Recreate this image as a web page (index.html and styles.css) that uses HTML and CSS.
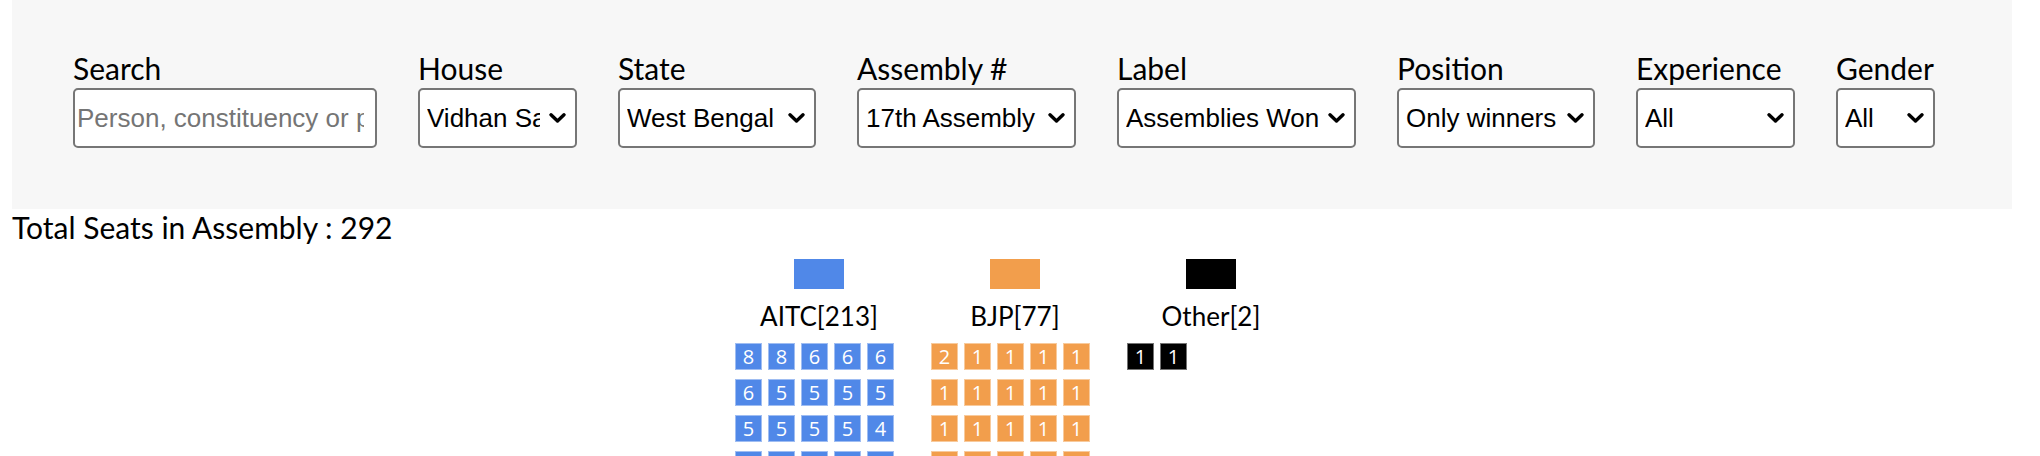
FILE: index.html
```html
<!DOCTYPE html>
<html lang="en">
<head>
<meta charset="utf-8">
<title>Assembly Seats</title>
<link rel="stylesheet" href="styles.css">
</head>
<body>
<form class="filters">
  <div class="field f-search">
    <label for="q">Search</label>
    <input id="q" type="text" placeholder="Person, constituency or party">
  </div>
  <div class="field f-house">
    <label for="house">House</label>
    <select id="house"><option>Vidhan Sabha</option><option>Lok Sabha</option></select>
  </div>
  <div class="field f-state">
    <label for="state">State</label>
    <select id="state"><option>West Bengal</option></select>
  </div>
  <div class="field f-assembly">
    <label for="asm">Assembly #</label>
    <select id="asm"><option>17th Assembly</option></select>
  </div>
  <div class="field f-label">
    <label for="lbl">Label</label>
    <select id="lbl"><option>Assemblies Won</option></select>
  </div>
  <div class="field f-position">
    <label for="pos">Position</label>
    <select id="pos"><option>Only winners</option></select>
  </div>
  <div class="field f-exp">
    <label for="exp">Experience</label>
    <select id="exp"><option>All</option></select>
  </div>
  <div class="field f-gender">
    <label for="gen">Gender</label>
    <select id="gen"><option>All</option></select>
  </div>
</form>

<div class="total">Total Seats in Assembly : 292</div>

<div class="chart">
  <div class="party aitc">
    <div class="swatch"></div>
    <div class="pname">AITC[213]</div>
    <div class="seats">
      <span>8</span><span>8</span><span>6</span><span>6</span><span>6</span>
      <span>6</span><span>5</span><span>5</span><span>5</span><span>5</span>
      <span>5</span><span>5</span><span>5</span><span>5</span><span>4</span>
      <span>4</span><span>4</span><span>4</span><span>4</span><span>4</span>
    </div>
  </div>
  <div class="party bjp">
    <div class="swatch"></div>
    <div class="pname">BJP[77]</div>
    <div class="seats">
      <span>2</span><span>1</span><span>1</span><span>1</span><span>1</span>
      <span>1</span><span>1</span><span>1</span><span>1</span><span>1</span>
      <span>1</span><span>1</span><span>1</span><span>1</span><span>1</span>
      <span>1</span><span>1</span><span>1</span><span>1</span><span>1</span>
    </div>
  </div>
  <div class="party other">
    <div class="swatch"></div>
    <div class="pname">Other[2]</div>
    <div class="seats">
      <span>1</span><span>1</span>
    </div>
  </div>
</div>
</body>
</html>
```
FILE: styles.css
```css
html {
  overflow: hidden;
}

body {
  margin: 0;
  background: #ffffff;
  color: #000000;
  font-family: "Lato", "Open Sans", sans-serif;
}

.filters {
  display: flex;
  align-items: flex-start;
  gap: 41px;
  margin: 0 0 0 12px;
  width: 2000px;
  box-sizing: border-box;
  padding: 48px 0 61px 61px;
  background: #f7f7f7;
}

.field {
  display: flex;
  flex-direction: column;
}

.field label {
  display: block;
  font-size: 30px;
  line-height: 40px;
  white-space: nowrap;
}

.field input,
.field select {
  box-sizing: border-box;
  height: 60px;
  margin: 0;
  border: 2px solid #767676;
  border-radius: 5px;
  background-color: #ffffff;
  color: #000000;
  font-family: "Liberation Sans", Arial, sans-serif;
  font-size: 26px;
  outline: none;
}

.field input {
  width: 304px;
  padding: 0 11px 0 2px;
}

.field input::placeholder {
  color: #757575;
  opacity: 1;
}

.field select {
  -webkit-appearance: none;
  appearance: none;
  padding: 0 30px 0 7px;
  background-image: url("data:image/svg+xml;utf8,<svg xmlns='http://www.w3.org/2000/svg' width='17' height='10' viewBox='0 0 17 10'><path d='M2 1.8 L8.5 8 L15 1.8' fill='none' stroke='black' stroke-width='3.4' stroke-linecap='round' stroke-linejoin='round'/></svg>");
  background-repeat: no-repeat;
  background-size: 17px 10px;
  background-position: right 9px center;
}

.f-house select { width: 159px; padding-right: 35px; }
.f-state select { width: 198px; }
.f-assembly select { width: 219px; }
.f-label select { width: 239px; padding-right: 26px; }
.f-position select { width: 198px; }
.f-exp select { width: 159px; }
.f-gender select { width: 99px; }

.total {
  margin-left: 12px;
  font-size: 30px;
  line-height: 36px;
}

.chart {
  display: flex;
  justify-content: center;
  margin: 14px 22px 0 12px;
}

.party {
  width: 196px;
  display: flex;
  flex-direction: column;
}

.swatch {
  width: 50px;
  height: 30px;
  margin: 0 auto;
}

.pname {
  margin-top: 9px;
  text-align: center;
  font-size: 26px;
  line-height: 36px;
}

.seats {
  display: grid;
  grid-template-columns: repeat(5, 27px);
  grid-auto-rows: 27px;
  column-gap: 6px;
  row-gap: 9px;
  padding-left: 14px;
  margin-top: 9px;
}

.seats span {
  box-sizing: border-box;
  display: flex;
  align-items: center;
  justify-content: center;
  border: 1px solid rgba(255, 255, 255, 0.45);
  color: #ffffff;
  font-family: "Open Sans", "Noto Sans", sans-serif;
  font-size: 20px;
  line-height: 1;
}

.aitc .swatch,
.aitc .seats span {
  background-color: #5088e8;
}

.bjp .swatch,
.bjp .seats span {
  background-color: #f29e4c;
}

.other .swatch,
.other .seats span {
  background-color: #000000;
}
```
